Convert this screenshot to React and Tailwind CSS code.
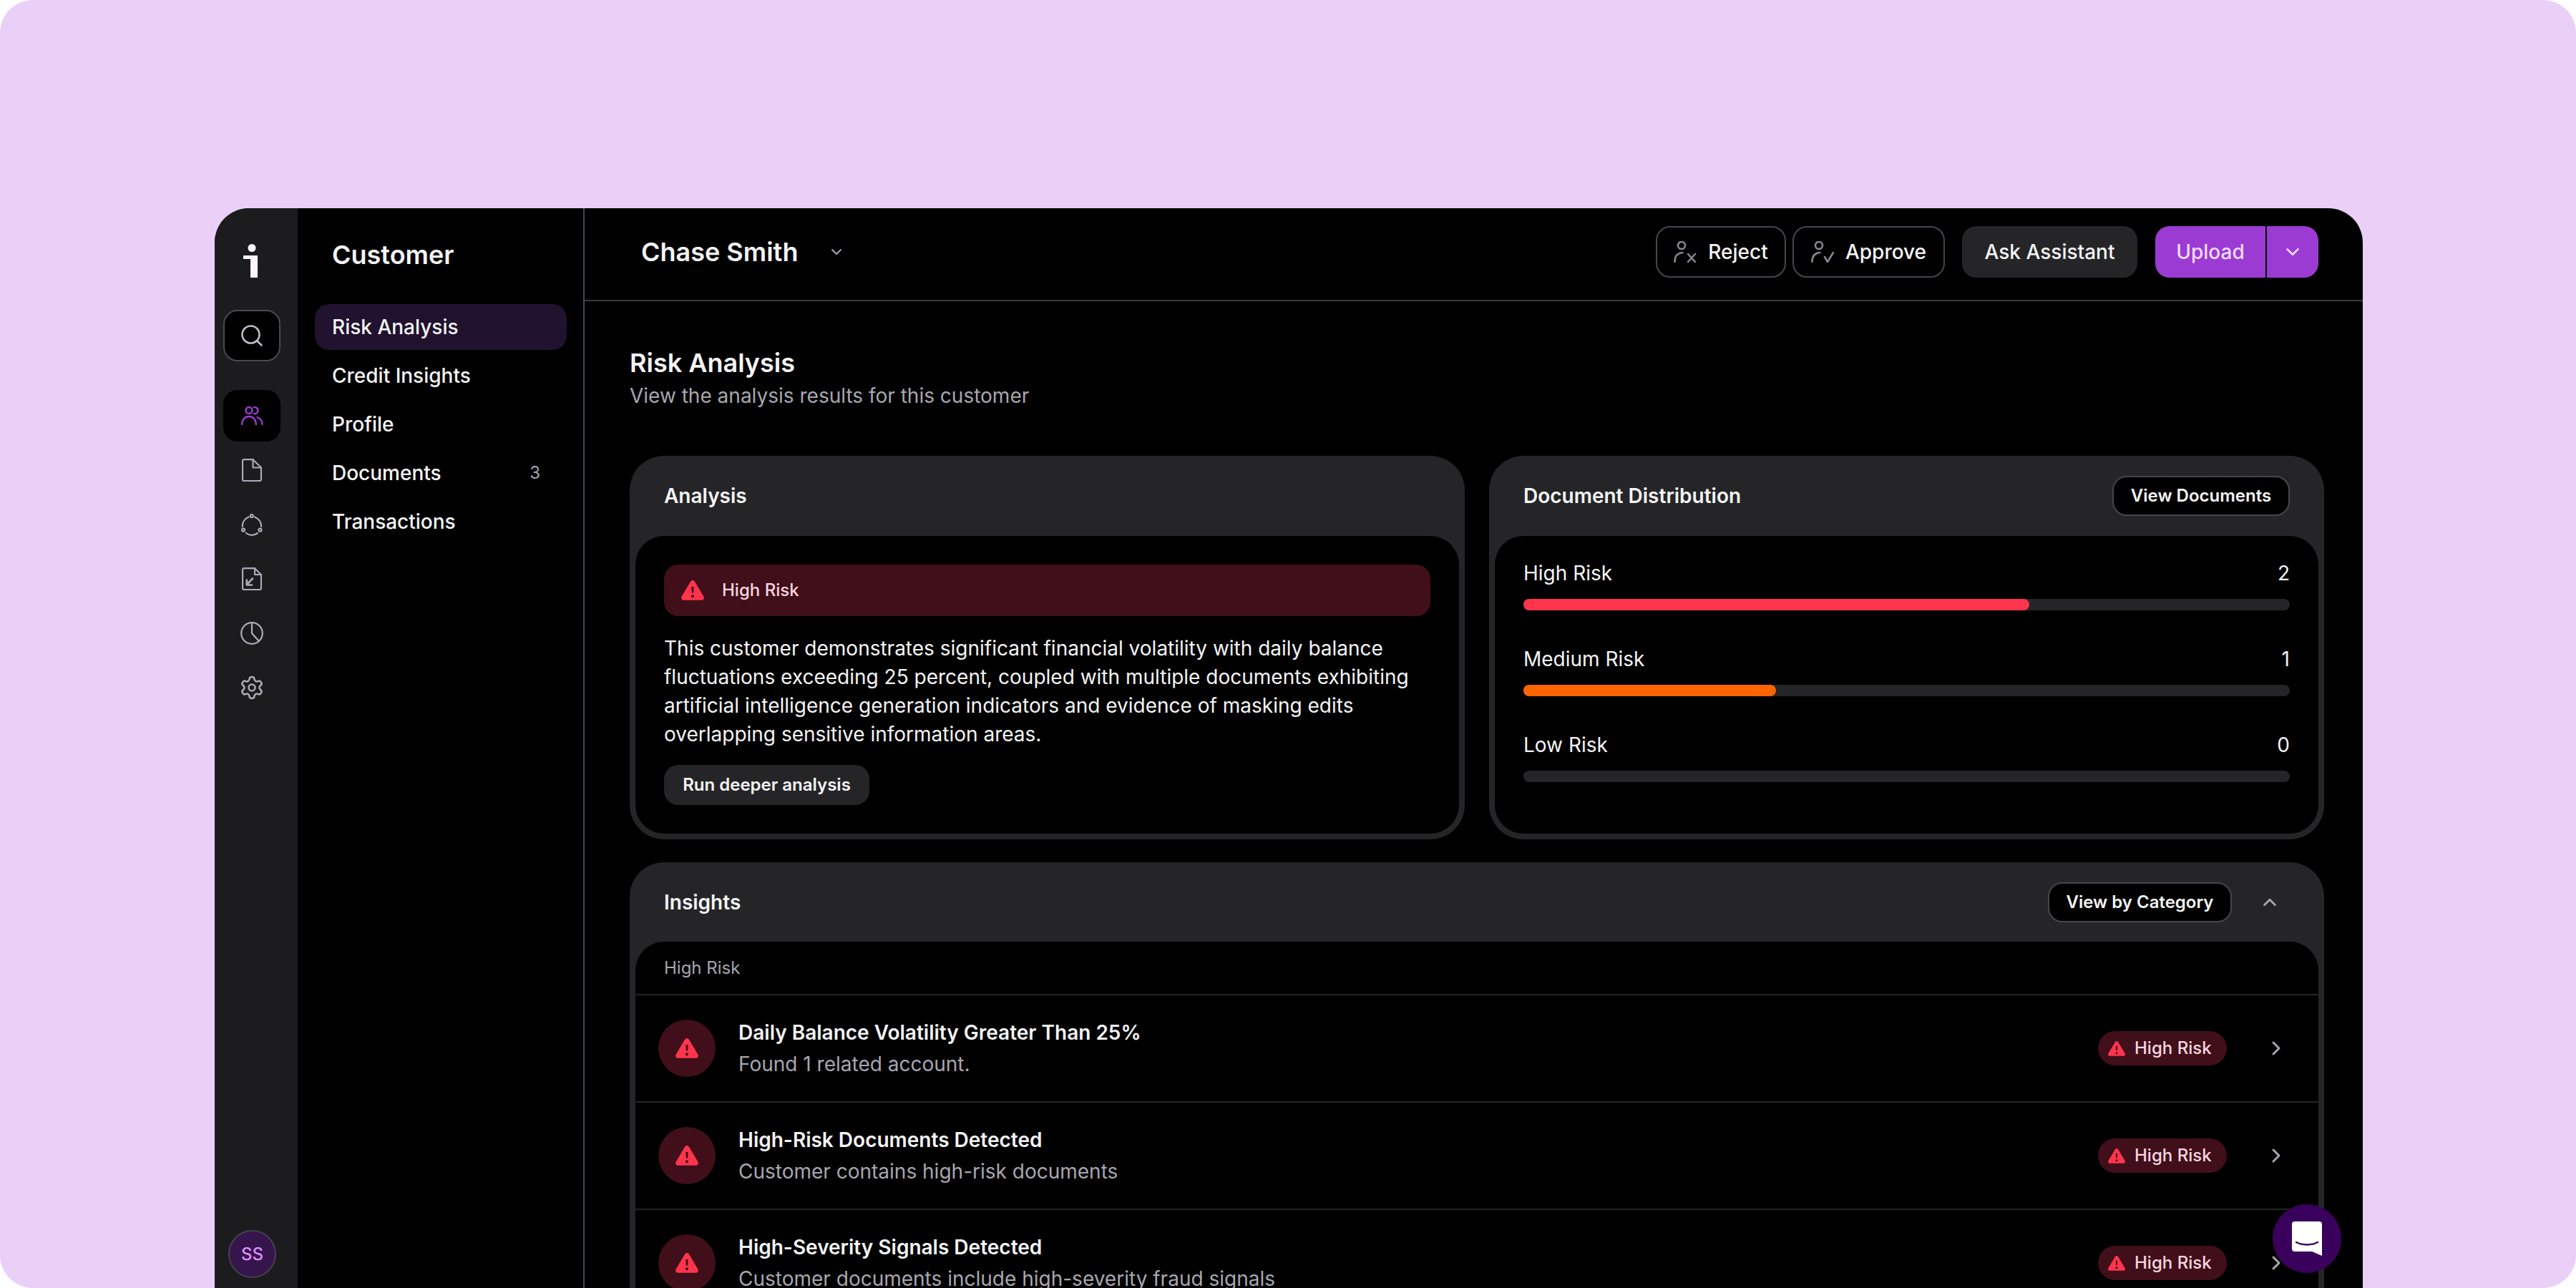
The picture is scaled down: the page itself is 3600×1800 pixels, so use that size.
import React from "react";
import { ChevronDown, ChevronUp, ChevronRight, Search, Settings } from "lucide-react";

const railIcon = "text-[#aeaab8]";

function Warn({ className }) {
  return (
    <svg viewBox="0 0 32 28" className={className} fill="none">
      <path fillRule="evenodd" clipRule="evenodd" fill="#ff344d" d="M13.2 1.6c1.3-2.1 4.3-2.1 5.6 0l12.6 21.2c1.3 2.2-.2 5-2.8 5H3.400c-2.600 0-4.100-2.800-2.800-5L13.200 1.600ZM14.400 9h3.200l-.4 8.600h-2.400L14.400 9Zm1.600 11.200a2.100 2.100 0 1 1 0 4.200 2.100 2.100 0 0 1 0-4.200Z" />
    </svg>
  );
}

function People({ className }) {
  return (
    <svg viewBox="0 0 31 26" className={className} fill="none" stroke="currentColor" strokeWidth="2.400" strokeLinecap="round">
      <circle cx="11" cy="5.500" r="4.500" />
      <path d="M1.200 25c0-6.500 4-11 9.800-11s9.800 4.500 9.800 11" />
      <path d="M17.500 1c3-.5 6 1.500 6 4.500s-2.500 5-5.500 4.800" />
      <path d="M22.500 15c4 1.500 7 5 7 10" />
    </svg>
  );
}

function Doc({ className }) {
  return (
    <svg viewBox="0 0 28 32" className={className} fill="none" stroke="currentColor" strokeWidth="2.200" strokeLinejoin="round" strokeLinecap="round">
      <path d="M3 1.200h12.500L27 12.500V29a2 2 0 0 1-2 2H3a2 2 0 0 1-2-2V3.200a2 2 0 0 1 2-2Z" />
      <path d="M15.500 1.200V12.500H27" />
    </svg>
  );
}

function Cycle({ className }) {
  return (
    <svg viewBox="0 0 30 31" className={className} fill="none" stroke="currentColor" strokeWidth="2.200" strokeLinecap="round">
      <circle cx="14.700" cy="3" r="2" />
      <circle cx="3" cy="22.700" r="2" />
      <circle cx="26.500" cy="22.700" r="2" />
      <path d="M10.500 4.500C5 7 1.500 12 1.800 18" />
      <path d="M19 4.500c5.500 2.500 9.300 7.500 9.200 13.500" />
      <path d="M7 27c4.500 3.800 11 3.800 16 0" />
    </svg>
  );
}

function DocArrow({ className }) {
  return (
    <svg viewBox="0 0 28 32" className={className} fill="none" stroke="currentColor" strokeWidth="2.200" strokeLinejoin="round" strokeLinecap="round">
      <path d="M3 1.200h15l9 9V29a2 2 0 0 1-2 2H3a2 2 0 0 1-2-2V3.200a2 2 0 0 1 2-2Z" />
      <path d="M18 1.200V10h9" />
      <path d="M15 15.500 7 24M6.800 17.500V24.500H14" strokeWidth="2.600" />
    </svg>
  );
}

function Pie({ className }) {
  return (
    <svg viewBox="0 0 32 32" className={className} fill="none" stroke="currentColor" strokeWidth="2.200" strokeLinecap="round">
      <circle cx="16" cy="16" r="14.800" />
      <path d="M16 1.500V16l9.500 10.500" />
    </svg>
  );
}

function PersonX({ className }) {
  return (
    <svg viewBox="0 0 32 30" className={className} fill="none" stroke="#85858d" strokeWidth="2.600" strokeLinecap="round">
      <circle cx="11" cy="6" r="5" />
      <path d="M1.500 29c0-8 4-12.500 11-13" />
      <path d="m20 18 10 11M30 18 20 29" />
    </svg>
  );
}

function PersonCheck({ className }) {
  return (
    <svg viewBox="0 0 32 30" className={className} fill="none" stroke="#85858d" strokeWidth="2.600" strokeLinecap="round" strokeLinejoin="round">
      <circle cx="11" cy="6" r="5" />
      <path d="M1.500 29c0-8 4-12.500 11-13" />
      <path d="m19 22 4 7 8-13" />
    </svg>
  );
}

function Chat() {
  return (
    <svg viewBox="0 0 42 48" className="h-[48px] w-[42px]">
      <path fill="#fff" d="M4 0h34a4 4 0 0 1 4 4v44l-14-6H4a4 4 0 0 1-4-4V4a4 4 0 0 1 4-4Z" />
      <path fill="none" stroke="#3a015c" strokeWidth="2.500" strokeLinecap="round" d="M6 29c8 4.500 22 4.500 30 0" />
    </svg>
  );
}

function Logo() {
  return (
    <svg viewBox="0 0 20 47" className="h-[47px] w-[20px]">
      <circle cx="12" cy="5.500" r="5.500" fill="#fbf4ff" />
      <path fill="#fbf4ff" d="M0 16h20v31H10V21H0Z" />
    </svg>
  );
}

const navItems = ["Credit Insights", "Profile", "Documents", "Transactions"];

const insights = [
  ["Daily Balance Volatility Greater Than 25%", "Found 1 related account."],
  ["High-Risk Documents Detected", "Customer contains high-risk documents"],
  ["High-Severity Signals Detected", "Customer documents include high-severity fraud signals"],
];

function Bar({ label, value, fill, color }) {
  return (
    <div>
      <div className="flex h-[40px] items-center justify-between text-[28px] text-[#f4f4f5]">
        <span>{label}</span>
        <span>{value}</span>
      </div>
      <div className="mt-[16px] h-[16px] rounded-full bg-[#252527]">
        {fill && <div className={`h-full rounded-full ${color}`} style={{ width: fill }} />}
      </div>
    </div>
  );
}

export default function App() {
  return (
    <div className="bg-white">
      <div className="relative h-[1800px] w-[3600px] overflow-hidden rounded-[46px] bg-[#ead0f7] pl-[300px] pr-[298px] pt-[291px] font-['Inter',sans-serif]">
        <div className="flex h-[1509px] overflow-hidden rounded-t-[48px] bg-black text-[#f4f4f5]">
          <aside className="flex w-[116px] shrink-0 flex-col items-start bg-[#1c1c1e] pb-[14px] pl-[12px] pt-[50px]">
            <div className="flex w-[76px] justify-center">
              <Logo />
            </div>
            <button className="mt-[45px] flex h-[72px] w-[80px] items-center justify-center rounded-[20px] border-2 border-[#4a4a52] bg-black">
              <Search className="h-[36px] w-[36px] text-[#c0bcc8]" strokeWidth={1.7} />
            </button>
            <div className="mt-[40px] flex flex-col items-center gap-[4px]">
              <div className="flex h-[72px] w-[80px] items-center justify-center rounded-[20px] bg-black text-[#9b3bd3]">
                <People className="h-[26px] w-[31px]" />
              </div>
              <div className={`flex h-[72px] w-[80px] items-center justify-center ${railIcon}`}>
                <Doc className="h-[32px] w-[28px]" />
              </div>
              <div className={`flex h-[72px] w-[80px] items-center justify-center ${railIcon}`}>
                <Cycle className="h-[31px] w-[30px]" />
              </div>
              <div className={`flex h-[72px] w-[80px] items-center justify-center ${railIcon}`}>
                <DocArrow className="h-[32px] w-[28px]" />
              </div>
              <div className={`flex h-[72px] w-[80px] items-center justify-center ${railIcon}`}>
                <Pie className="h-[32px] w-[32px]" />
              </div>
              <div className={`flex h-[72px] w-[80px] items-center justify-center ${railIcon}`}>
                <Settings className="h-[36px] w-[36px]" strokeWidth={1.7} />
              </div>
            </div>
            <div className="ml-[7px] mt-auto flex h-[67px] w-[67px] items-center justify-center rounded-full border-2 border-[#45404c] bg-[#36154d] text-[24px] font-medium text-[#df8ffb]">
              SS
            </div>
          </aside>

          <nav className="w-[401px] shrink-0 border-r-2 border-[#47454d] pl-[24px] pr-[23px]">
            <div className="flex h-[130px] items-center pl-[24px] text-[36px] font-semibold leading-none">Customer</div>
            <div className="mt-[4px] flex flex-col gap-[4px]">
              <div className="flex h-[64px] items-center rounded-[20px] bg-[#21122f] pl-[24px] text-[28px] font-medium">Risk Analysis</div>
              {navItems.map((n) => (
                <div key={n} className="flex h-[64px] items-center justify-between pl-[24px] pr-[37px] text-[28px] font-medium">
                  <span>{n}</span>
                  {n === "Documents" && <span className="text-[24px] font-normal text-[#a8a6b0]">3</span>}
                </div>
              ))}
            </div>
          </nav>

          <main className="min-w-0 flex-1">
            <header className="flex h-[130px] items-center border-b-2 border-[#3a383f] pb-[6px] pl-[79px] pr-[62px]">
              <span className="text-[36px] font-semibold">Chase Smith</span>
              <ChevronDown className="ml-[42px] h-[24px] w-[24px] text-[#a8a6b0]" strokeWidth={2} />
              <div className="ml-auto flex items-center">
                <button className="flex h-[72px] w-[182px] items-center justify-center gap-[16px] rounded-[20px] border-2 border-[#47454d] text-[28px] font-medium">
                  <PersonX className="h-[30px] w-[32px]" />
                  Reject
                </button>
                <button className="ml-[9px] flex h-[72px] w-[213px] items-center justify-center gap-[16px] rounded-[20px] border-2 border-[#47454d] text-[28px] font-medium">
                  <PersonCheck className="h-[30px] w-[32px]" />
                  Approve
                </button>
                <button className="ml-[24px] flex h-[72px] w-[245px] items-center justify-center rounded-[20px] bg-[#252527] text-[28px] font-medium">
                  Ask Assistant
                </button>
                <div className="ml-[25px] flex h-[72px] w-[228px] overflow-hidden rounded-[20px] bg-[#9b3bd3] text-[#f3dcfd]">
                  <span className="flex w-[156px] items-center justify-center border-r-2 border-black text-[28px] font-medium">Upload</span>
                  <span className="flex flex-1 items-center justify-center">
                    <ChevronDown className="h-[30px] w-[30px]" strokeWidth={2} />
                  </span>
                </div>
              </div>
            </header>

            <div className="pl-[63px] pr-[54px] pt-[64px]">
              <h1 className="text-[36px] font-semibold leading-[44px]">Risk Analysis</h1>
              <p className="mt-[4px] text-[28px] leading-[40px] text-[#a8a6b0]">View the analysis results for this customer</p>

              <div className="mt-[64px] grid grid-cols-2 gap-[34px]">
                <section className="flex h-[536px] flex-col rounded-[48px] bg-[#252527] px-[8px] pb-[8px]">
                  <div className="flex h-[112px] items-center pl-[40px] text-[28px] font-semibold">Analysis</div>
                  <div className="flex-1 rounded-[40px] bg-black p-[40px]">
                    <div className="flex h-[72px] items-center rounded-[20px] bg-[#400f19] pl-[24px] text-[24px] font-medium text-[#fbd5e0]">
                      <Warn className="mr-[25px] h-[28px] w-[32px]" />
                      High Risk
                    </div>
                    <p className="mt-[25px] text-[28px] leading-[40px] text-[#f4f4f5]">
                      This customer demonstrates significant financial volatility with daily balance fluctuations exceeding 25 percent, coupled with multiple documents exhibiting artificial intelligence generation indicators and evidence of masking edits overlapping sensitive information areas.
                    </p>
                    <button className="mt-[23px] flex h-[56px] w-[287px] items-center justify-center rounded-[20px] bg-[#252527] text-[24px] font-semibold">
                      Run deeper analysis
                    </button>
                  </div>
                </section>

                <section className="flex h-[536px] flex-col rounded-[48px] bg-[#252527] px-[8px] pb-[8px]">
                  <div className="flex h-[112px] items-center justify-between px-[40px]">
                    <span className="text-[28px] font-semibold">Document Distribution</span>
                    <button className="flex h-[56px] w-[248px] items-center justify-center rounded-[20px] border-2 border-[#47454d] bg-black text-[24px] font-semibold">
                      View Documents
                    </button>
                  </div>
                  <div className="flex flex-1 flex-col gap-[48px] rounded-[40px] bg-black px-[40px] pt-[32px]">
                    <Bar label="High Risk" value="2" fill="66%" color="bg-[#ff344d]" />
                    <Bar label="Medium Risk" value="1" fill="33%" color="bg-[#ff6400]" />
                    <Bar label="Low Risk" value="0" />
                  </div>
                </section>
              </div>

              <section className="mt-[32px] rounded-t-[48px] bg-[#252527] px-[8px]">
                <div className="flex h-[111px] items-center pl-[40px] pr-[53px]">
                  <span className="text-[28px] font-semibold">Insights</span>
                  <button className="ml-auto flex h-[56px] w-[257px] items-center justify-center rounded-[20px] border-2 border-[#47454d] bg-black text-[24px] font-semibold">
                    View by Category
                  </button>
                  <ChevronUp className="ml-[38px] h-[30px] w-[30px] text-[#a8a6b0]" strokeWidth={2.2} />
                </div>
                <div className="rounded-t-[40px] bg-black">
                  <div className="flex h-[75px] items-center border-b-2 border-[#252527] pl-[40px] text-[24px] text-[#a8a6b0]">High Risk</div>
                  {insights.map(([t, s]) => (
                    <div key={t} className="flex h-[150px] items-center border-b-2 border-[#252527] pl-[32px] pr-[43px]">
                      <div className="flex h-[80px] w-[80px] shrink-0 items-center justify-center rounded-full bg-[#400f19]">
                        <Warn className="h-[28px] w-[32px]" />
                      </div>
                      <div className="ml-[32px] flex flex-col gap-[4px]">
                        <div className="text-[28px] font-semibold leading-[40px]">{t}</div>
                        <div className="text-[28px] leading-[40px] text-[#a8a6b0]">{s}</div>
                      </div>
                      <div className="ml-auto flex h-[48px] w-[180px] items-center rounded-full bg-[#400f19] pl-[14px] text-[24px] font-medium text-[#fbd5e0]">
                        <Warn className="mr-[13px] h-[21px] w-[24px]" />
                        High Risk
                      </div>
                      <ChevronRight className="ml-[53px] h-[32px] w-[32px] text-[#a8a6b0]" strokeWidth={2.2} />
                    </div>
                  ))}
                </div>
              </section>
            </div>
          </main>
        </div>

        <button className="absolute left-[3176px] top-[1683px] flex h-[96px] w-[96px] items-center justify-center rounded-full bg-[#3a015c]">
          <Chat />
        </button>
      </div>
    </div>
  );
}
